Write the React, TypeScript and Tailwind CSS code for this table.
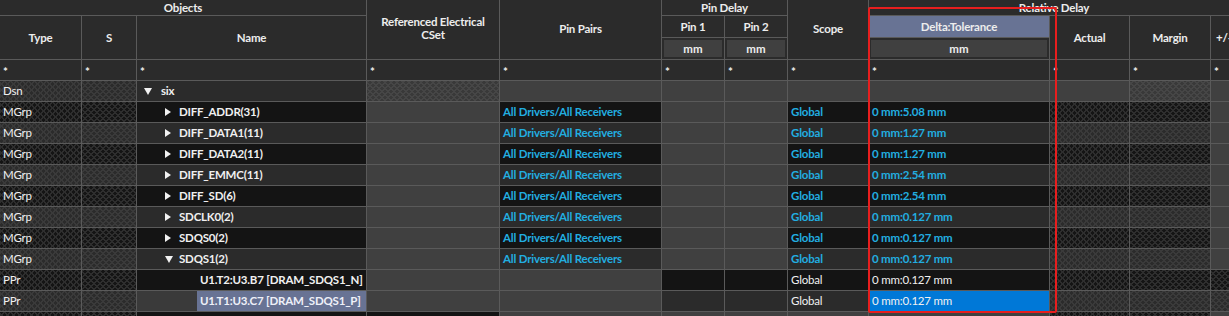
import React from "react";
import { twMerge } from "tailwind-merge";

// cell backgrounds used by the constraint grid
const DARK = "bg-[#141414]";
const MID = "bg-[#2b2b2b]";
const GRAY = "bg-[#404040]";
const HATCH_DARK =
  "bg-[#141414] bg-[image:repeating-linear-gradient(45deg,#2e2e2e_0_1px,transparent_1px_4.24px),repeating-linear-gradient(-45deg,#2e2e2e_0_1px,transparent_1px_4.24px)]";
const HATCH_MID =
  "bg-[#2b2b2b] bg-[image:repeating-linear-gradient(45deg,#3a3a3a_0_1px,transparent_1px_4.24px),repeating-linear-gradient(-45deg,#3a3a3a_0_1px,transparent_1px_4.24px)]";
const HATCH_GRAY =
  "bg-[#393939] bg-[image:repeating-linear-gradient(45deg,#464646_0_1px,transparent_1px_4.24px),repeating-linear-gradient(-45deg,#464646_0_1px,transparent_1px_4.24px)]";

const CYAN = "text-[#22aee0] font-bold";

type Row = {
  kind: "dsn" | "grp" | "ppr";
  name: string;
  open?: boolean;
  delta?: string;
  selected?: boolean;
};

const rows: Row[] = [
  { kind: "dsn", name: "six", open: true },
  { kind: "grp", name: "DIFF_ADDR(31)", delta: "0 mm:5.08 mm" },
  { kind: "grp", name: "DIFF_DATA1(11)", delta: "0 mm:1.27 mm" },
  { kind: "grp", name: "DIFF_DATA2(11)", delta: "0 mm:1.27 mm" },
  { kind: "grp", name: "DIFF_EMMC(11)", delta: "0 mm:2.54 mm" },
  { kind: "grp", name: "DIFF_SD(6)", delta: "0 mm:2.54 mm" },
  { kind: "grp", name: "SDCLK0(2)", delta: "0 mm:0.127 mm" },
  { kind: "grp", name: "SDQS0(2)", delta: "0 mm:0.127 mm" },
  { kind: "grp", name: "SDQS1(2)", open: true, delta: "0 mm:0.127 mm" },
  { kind: "ppr", name: "U1.T2:U3.B7 [DRAM_SDQS1_N]", delta: "0 mm:0.127 mm" },
  { kind: "ppr", name: "U1.T1:U3.C7 [DRAM_SDQS1_P]", delta: "0 mm:0.127 mm", selected: true },
];

const Right = () => (
  <svg width="6" height="8" viewBox="0 0 6 8" className="shrink-0">
    <path d="M0 0L6 4L0 8Z" fill="#f2f2f2" />
  </svg>
);

const Down = () => (
  <svg width="8" height="7" viewBox="0 0 8 7" className="shrink-0">
    <path d="M0 0H8L4 7Z" fill="#f2f2f2" />
  </svg>
);

const Cell = ({ bg, className, children }: { bg: string; className?: string; children?: React.ReactNode }) => (
  <div
    className={twMerge(
      "flex items-center overflow-hidden whitespace-nowrap px-[3px] text-[11.5px] leading-none tracking-[-0.2px] text-[#f0f0f0]",
      bg,
      className
    )}
  >
    {children}
  </div>
);

const Head = ({ className, children }: { className: string; children?: React.ReactNode }) => (
  <div
    className={twMerge(
      "flex items-center justify-center overflow-hidden whitespace-nowrap bg-[#2b2b2b] text-center text-[11.5px] font-bold leading-[13px] tracking-[-0.2px] text-[#ededed]",
      className
    )}
  >
    {children}
  </div>
);

const Unit = ({ className }: { className: string }) => (
  <div className={twMerge("bg-[#2b2b2b] p-[2px]", className)}>
    <div className="flex h-full items-center justify-center bg-[#404040] text-[11.5px] font-bold text-[#ededed]">mm</div>
  </div>
);

function DataRow({ row, i }: { row: Row; i: number }) {
  if (row.kind === "dsn") {
    return (
      <>
        <Cell bg={HATCH_MID}>Dsn</Cell>
        <Cell bg={HATCH_MID} />
        <Cell bg={MID} className="gap-[9px] pl-[7px] font-bold">
          <Down />
          {row.name}
        </Cell>
        <Cell bg={HATCH_GRAY} />
        <Cell bg={GRAY} />
        <Cell bg={GRAY} />
        <Cell bg={GRAY} />
        <Cell bg={GRAY} />
        <Cell bg={GRAY} />
        <Cell bg={GRAY} />
        <Cell bg={HATCH_GRAY} />
        <Cell bg={GRAY} />
      </>
    );
  }

  const dark = i % 2 === 1;
  const base = dark ? DARK : MID;
  const hatch = dark ? HATCH_DARK : HATCH_MID;

  if (row.kind === "grp") {
    return (
      <>
        <Cell bg={hatch}>MGrp</Cell>
        <Cell bg={hatch} />
        <Cell bg={base} className="gap-[8px] pl-[28px] font-bold">
          {row.open ? <Down /> : <Right />}
          <span className={row.open ? "-ml-[2px]" : ""}>{row.name}</span>
        </Cell>
        <Cell bg={GRAY} />
        <Cell bg={base} className={CYAN}>All Drivers/All Receivers</Cell>
        <Cell bg={GRAY} />
        <Cell bg={GRAY} />
        <Cell bg={base} className={CYAN}>Global</Cell>
        <Cell bg={base} className={CYAN}>{row.delta}</Cell>
        <Cell bg={hatch} />
        <Cell bg={hatch} />
        <Cell bg={GRAY} />
      </>
    );
  }

  return (
    <>
      <Cell bg={hatch}>PPr</Cell>
      <Cell bg={hatch} />
      {row.selected ? (
        <div className="flex bg-[#3a3a3a] pl-[60px]">
          <div className="flex flex-1 items-center overflow-hidden whitespace-nowrap bg-[#687394] pl-[3px] text-[11.5px] font-bold leading-none tracking-[-0.2px] text-[#eef0f8]">
            {row.name}
          </div>
        </div>
      ) : (
        <Cell bg={base} className="pl-[63px] font-bold">{row.name}</Cell>
      )}
      <Cell bg={GRAY} />
      <Cell bg={GRAY} />
      <Cell bg={base} />
      <Cell bg={base} />
      <Cell bg={base}>Global</Cell>
      <Cell bg={row.selected ? "bg-[#0078d7]" : base}>{row.delta}</Cell>
      <Cell bg={hatch} />
      <Cell bg={hatch} />
      <Cell bg={hatch} />
    </>
  );
}

export default function App() {
  return (
    <div className="relative h-[316px] w-[1229px] overflow-hidden bg-[#5a5a5a] font-['Lato',sans-serif]">
      <div className="grid w-max gap-px bg-[#5a5a5a] grid-cols-[81px_54px_229px_132px_161px_62px_62px_80px_180px_79px_80px_28px] grid-rows-[15px_21px_21px_20px_repeat(12,20px)]">
        {/* column headers */}
        <Head className="col-span-3 col-start-1 row-start-1">Objects</Head>
        <Head className="col-start-1 row-span-2 row-start-2">Type</Head>
        <Head className="col-start-2 row-span-2 row-start-2">S</Head>
        <Head className="col-start-3 row-span-2 row-start-2">Name</Head>
        <Head className="col-start-4 row-span-3 row-start-1 whitespace-normal pb-[4px]">
          Referenced Electrical
          <br />
          CSet
        </Head>
        <Head className="col-start-5 row-span-3 row-start-1 pb-[3px]">Pin Pairs</Head>
        <Head className="col-span-2 col-start-6 row-start-1">Pin Delay</Head>
        <Head className="col-start-6 row-start-2">Pin 1</Head>
        <Head className="col-start-7 row-start-2">Pin 2</Head>
        <Unit className="col-start-6 row-start-3" />
        <Unit className="col-start-7 row-start-3" />
        <Head className="col-start-8 row-span-3 row-start-1 pb-[3px]">Scope</Head>
        <Head className="col-span-4 col-start-9 row-start-1">Relative Delay</Head>
        <Head className="col-start-9 row-start-2 bg-[#687394]">Delta:Tolerance</Head>
        <Unit className="col-start-9 row-start-3" />
        <Head className="col-start-10 row-span-2 row-start-2">Actual</Head>
        <Head className="col-start-11 row-span-2 row-start-2">Margin</Head>
        <Head className="col-start-12 row-span-2 row-start-2 justify-start pl-[5px]">+/-</Head>

        {/* filter row */}
        {Array.from({ length: 12 }, (_, c) => (
          <Cell key={c} bg={MID} className="items-start pt-[6px] font-bold">*</Cell>
        ))}

        {rows.map((row, i) => (
          <DataRow key={row.name} row={row} i={i} />
        ))}

        {/* next row, cut off at the bottom edge */}
        <Cell bg={HATCH_DARK} />
        <Cell bg={HATCH_DARK} />
        <Cell bg={DARK} />
        <Cell bg={DARK} />
        <Cell bg={GRAY} />
        <Cell bg={GRAY} />
        <Cell bg={GRAY} />
        <Cell bg={GRAY} />
        <Cell bg={GRAY} />
        <Cell bg={HATCH_DARK} />
        <Cell bg={HATCH_DARK} />
        <Cell bg={GRAY} />
      </div>

      {/* red markup box around the Delta:Tolerance column */}
      <div className="pointer-events-none absolute left-[868px] top-[7px] h-[306px] w-[189px] rounded-[2px] border-2 border-[#e81e1e]" />
    </div>
  );
}
